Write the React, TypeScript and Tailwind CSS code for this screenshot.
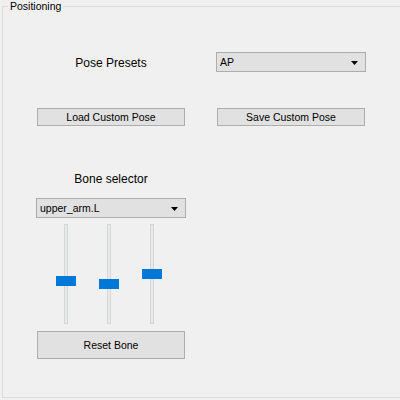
import React from "react";

const font = { fontFamily: '"Liberation Sans", Arial, sans-serif' };

function Combo({ value }: { value: string }) {
  return (
    <div className="flex h-[20px] w-[150px] items-center justify-between border border-[#adadad] bg-[#e1e1e1] pl-[3px] pr-[7px] pt-[1px] text-[10.5px] text-black">
      <span>{value}</span>
      <svg width="7" height="4" viewBox="0 0 7 4">
        <path d="M0 0H7L3.5 4Z" fill="#000" />
      </svg>
    </div>
  );
}

function Button({ label, h = 18 }: { label: string; h?: number }) {
  return (
    <div
      className={`ml-[1px] flex w-[148px] items-center justify-center border border-[#adadad] bg-[#e1e1e1] text-[10.5px] text-black ${
        h === 18 ? "h-[18px] pt-[1px]" : "h-[28px] pt-[2px]"
      }`}
    >
      {label}
    </div>
  );
}

function Slider({ pos }: { pos: number }) {
  return (
    <div className="relative flex h-[100px] w-[20px] justify-center">
      <div className="h-[100px] w-[4px] border border-[#d6d6d6] bg-[#e7eaea]" />
      <div
        className="absolute left-0 h-[10px] w-[20px] bg-[#0078d7]"
        style={{ top: pos }}
      />
    </div>
  );
}

export default function App() {
  return (
    <div className="h-[400px] w-[400px] overflow-hidden bg-[#f0f0f0]" style={font}>
      <fieldset className="ml-[2px] h-[398px] w-[420px] border border-[#dcdcdc]">
        <legend className="ml-[5px] px-[2px] text-[10.5px] leading-[13px] text-black">
          Positioning
        </legend>
        <div className="flex flex-col pl-[33px] pt-[39px]">
          <div className="grid h-[20px] grid-cols-[150px_150px] items-center gap-x-[30px]">
            <div className="pt-[2px] text-center text-[12px] text-black">Pose Presets</div>
            <Combo value="AP" />
          </div>
          <div className="mt-[36px] grid grid-cols-[150px_150px] gap-x-[30px]">
            <Button label="Load Custom Pose" />
            <Button label="Save Custom Pose" />
          </div>
          <div className="mt-[46px] w-[150px] text-center text-[12px] leading-[14px] text-black">
            Bone selector
          </div>
          <div className="mt-[12px]">
            <Combo value="upper_arm.L" />
          </div>
          <div className="mt-[6px] flex gap-[23px] pl-[20px]">
            <Slider pos={52} />
            <Slider pos={55} />
            <Slider pos={45} />
          </div>
          <div className="mt-[7px]">
            <Button label="Reset Bone" h={28} />
          </div>
        </div>
      </fieldset>
    </div>
  );
}
